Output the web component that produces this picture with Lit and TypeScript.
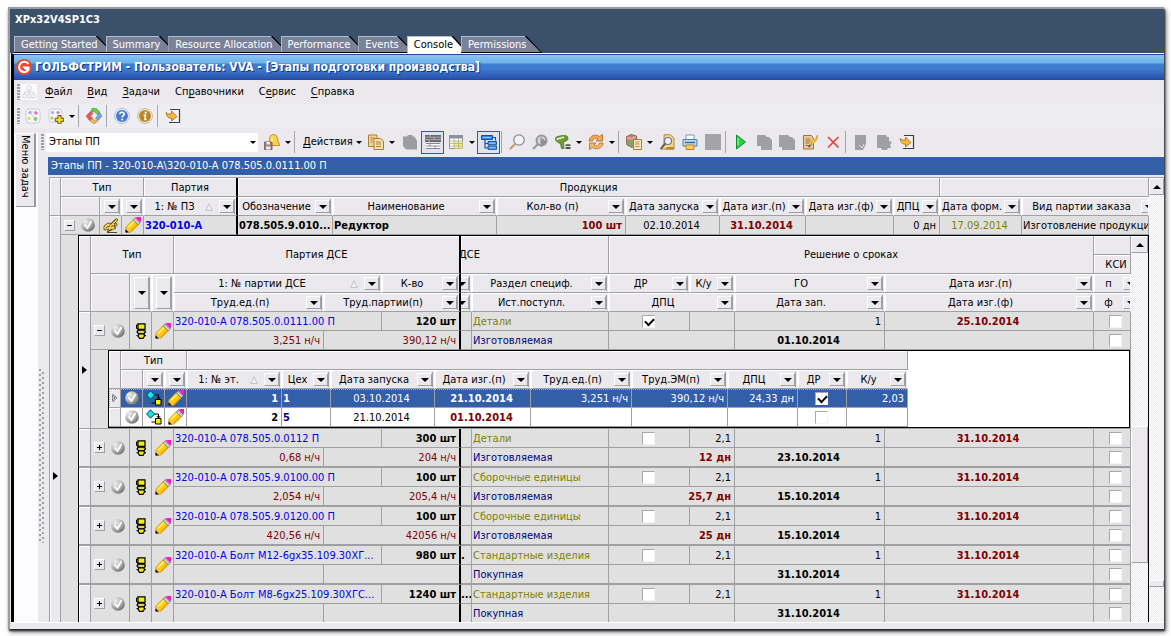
import { LitElement, html, css, svg, nothing } from "lit";
import { customElement, property, state } from "lit/decorators.js";

const ball = svg`
  <defs><radialGradient id="b" cx=".3" cy=".25" r=".85"><stop offset="0" stop-color="#f0f0f0"/><stop offset=".5" stop-color="#b8b8b8"/><stop offset="1" stop-color="#686868"/></radialGradient></defs>
  <circle cx="8" cy="8" r="6.800" fill="url(#b)"/><path d="M4.500 7.500 7.500 11 11.500 4" fill="none" stroke="#fff" stroke-width="1.800"/>`;
const exportArrow = svg`
  <path d="M5 1.500h9.500v13H4" fill="#f3f2f5" stroke="#3c3c44" stroke-width="1.200"/>
  <path d="M1 4.500c2 2 3 1.500 5.500 1.500V3L12 8.500 6.500 13V10C3.500 10.500 2 9 1 4.500z" fill="#f8b93c" stroke="#9a6410" stroke-width=".8"/>`;

const icons: Record<string, unknown> = {
  logo: svg`<circle cx="8" cy="8" r="8" fill="#e8492f"/><path d="M12.500 4.800A5.200 5.200 0 1 0 12.500 11V8.500H8.500L11 11" fill="none" stroke="#fff" stroke-width="2"/>`,
  ball,
  minus: svg`<path d="M4 8h8" stroke="#000" stroke-width="1.800"/>`,
  plus: svg`<path d="M3.500 8h9M8 3.500v9" stroke="#000" stroke-width="1.800"/>`,
  pencil: svg`
    <path d="M.8 15.200V10L8 2.800 13.200 8 6 15.200z" fill="#ffcc08" stroke="#c88800" stroke-width=".6"/>
    <path d="M3 10.500 9.500 4" stroke="#fff08a" stroke-width="1.400"/><path d="M6 14 12 8" stroke="#f0a400" stroke-width="1.400"/>
    <path d="M8 2.800 10.500.6 15.400 5.500 13.200 8z" fill="#b4b4b4" stroke="#707070" stroke-width=".6"/><path d="M9.500 2.500 13.800 6.800" stroke="#e8e8e8"/>
    <path d="M10.500.6 12.500 0H16V4L15.400 5.500z" fill="#ff18c8"/>
    <path d="M.8 15.200V10.500l4.700 4.700z" fill="#e8b878"/><path d="M.5 15.500V12.200l3.300 3.300z" fill="#000"/>`,
  quill: svg`
    <path d="M1 9 5 6 8 6.500 13 1.500 15 3 11 7 14 6.500V8.500L11 10 13 11 10 12.500 4 15 6 12 1 13z" fill="#f8d860" stroke="#5a3c00" stroke-width=".8"/>
    <path d="M3 10.500 7 9M6.500 8.500 13 2.500M5.500 14 9 12M8 9.500 12.500 8M4 15.500h10" stroke="#3c2400" stroke-width=".8" fill="none"/>`,
  unit: svg`
    <path d="M5 .8h7v5.500H5z" fill="#f4ee10" stroke="#000" stroke-width="1.200"/><path d="M5 2H3.500v3.500H5" fill="none" stroke="#000"/>
    <path d="M5 7.200h6.500l1 1.800-1.500 1.800H5.500L4 9z" fill="#b8b8a0" stroke="#000" stroke-width="1.200"/><path d="M6.500 9h4" stroke="#f4ee10" stroke-width="1.200"/>
    <path d="M6 11h5l.5 2-1.500 2.300H6.500L5 13z" fill="#f4ee10" stroke="#000" stroke-width="1.200"/><path d="M3.500 12.500 5.500 13M13 12.500 11 13" stroke="#000"/>`,
  flow: svg`
    <path d="M4.500 .8 8.600 5 4.500 9.200 .6 5z" fill="#10e8f0" stroke="#004848" stroke-width="1"/>
    <path d="M8.500 5H12.500v4M10.800 7 12.500 9 14.200 7" fill="none" stroke="#000" stroke-width="1"/>
    <path d="M9.500 9.500h5.500v5.500H9.500z" fill="#f8f000" stroke="#000"/><path d="M5.500 13h3.500" stroke="#000"/>`,
  current: svg`<path d="M5.500 3 11.500 8 5.500 13z" fill="#fff" stroke="#000" stroke-width="1.200" stroke-dasharray="1.500 .7"/><circle cx="7.800" cy="8" r="1" fill="#000"/>`,
  tree: svg`<path d="M0 0h16v16H0z" fill="#fbfbfd"/><path d="M6 2h4v4H6zM2 10h3v4H2zM7 10h3v4H7zM11 10h3v4h-3zM8 6v4M3.500 10V8h9v2" fill="none" stroke="#d8d8dc"/>`,
  nodes: svg`<rect x="1" y="1" width="14" height="14" rx="3" fill="#f5f5f8" stroke="#c4c6cc" stroke-width=".8"/>
    <circle cx="5" cy="4.500" r="1.600" fill="#7db4e8"/><circle cx="11" cy="5" r="1.800" fill="#e070c8"/><circle cx="4" cy="10.500" r="1.600" fill="#dfdc60"/><circle cx="10.500" cy="11" r="2" fill="#8cc870"/><path d="M5 5 10 10M6 4h4" stroke="#b8bcc4" stroke-width=".7"/>`,
  nodesAdd: svg`<rect x="1" y="1" width="13" height="13" rx="3" fill="#f5f5f8" stroke="#c4c6cc" stroke-width=".8"/>
    <circle cx="4.500" cy="4.500" r="1.500" fill="#7db4e8"/><circle cx="10" cy="4.500" r="1.600" fill="#e070c8"/><circle cx="4" cy="10" r="1.600" fill="#a8cc60"/>
    <path d="M10 7.500h3v2.800h2.800v3H13V16h-3v-2.700H7.200v-3H10z" fill="#f2e030" stroke="#4c4410" stroke-width=".9"/>`,
  ring: svg`<path d="M6 0 10.500.5 14 4 11.500 6.500 8.500 4 5 4z" fill="#6ccc50" stroke="#38902c" stroke-width=".5"/><path d="M13.500 4.500 16 8 12.500 12 9.500 10.500 11.500 7.500z" fill="#70a8ec" stroke="#3468b0" stroke-width=".5"/>
    <path d="M12 12.500 8.500 16 4 13 6 10.500 8.500 12z" fill="#f0b858" stroke="#b06820" stroke-width=".5"/><path d="M4.500 3.500 0 8 3.500 12.500 6.500 10 4.500 8 7 5.500z" fill="#e85c58" stroke="#a83030" stroke-width=".5"/>`,
  help: svg`<circle cx="8" cy="8" r="7.500" fill="#e8eefa" stroke="#a8b8d8" stroke-width=".8"/><circle cx="8" cy="8" r="6" fill="#4a7ad8"/><path d="M5.800 6.300C5.900 3.500 10.300 3.700 10.200 6.300 10.100 7.700 8.200 7.700 8.100 9.400" stroke="#fff" stroke-width="1.600" fill="none"/><circle cx="8.100" cy="11.500" r="1" fill="#fff"/>`,
  info: svg`<circle cx="8" cy="8" r="7.500" fill="#f2ecd8" stroke="#c8b480" stroke-width=".8"/><circle cx="8" cy="8" r="6" fill="#b8862c"/><circle cx="8.600" cy="4.700" r="1.100" fill="#fff"/><path d="M6.600 7.300H8.500L7.900 11.500H9.500" stroke="#fff" stroke-width="1.500" fill="none"/>`,
  exit: exportArrow,
  bell: svg`<path d="M8.500.5h1.500c3 .5 3.500 3 4 6.500l2 4.500H4C6 8 4.500 1.500 8.500.5z" fill="#fbd04c" stroke="#b87c14" stroke-width=".8"/><path d="M8.500 3c-1 2-.5 4-1 6" stroke="#fff0b0" stroke-width="1.400" fill="none"/><path d="M.5 8h7.500v7.500H.5z" fill="#a08078" stroke="#6a5450" stroke-width=".8"/><path d="M2.500 8h3.500v2.500H2.500zM2 12.500h4.500v3H2z" fill="#eee"/>`,
  copy: svg`<path d="M.5 1h8.500v11.500H.5z" fill="#f2d498" stroke="#a87c34"/><path d="M6 4.500h6.500L15.500 7v8.500H6z" fill="#f8dfae" stroke="#a87c34"/><path d="M2.500 4h4M2.500 6h2M2.500 8h2M8 8h5M8 10h5M8 12.500h5" stroke="#b07c38" stroke-width="1.200"/>`,
  paste: svg`<path d="M1 2.500h4L6 1h4l1 1.500h1.500L15 7v8.500H4L1 12z" fill="#9c9ca0"/>`,
  bricks: svg`<path d="M0 1h16v7H0z" fill="#68686c"/><path d="M0 3.200h16M0 5.600h16M5 1v2M9 3v2.500M4 5.500V8" stroke="#b8b8bc" stroke-width=".9"/><path d="M1 9h14v6H1z" fill="#fff"/><path d="M1 9.500h14M1 12h14M1 14.500h14M5 9v3M10 12v3" stroke="#88888c" stroke-width="1"/>`,
  sheet: svg`<path d="M1.500 1.500h13v13h-13z" fill="#fff" stroke="#909094"/><path d="M1 1h14v3.500H1z" fill="#8c9098"/><path d="M6 7h8.500v7.500H6z" fill="#fbf264"/><path d="M1 7h14M1 9.500h14M1 12h14M6 4v11M10.500 4v11" stroke="#a8a8ac" stroke-width=".8"/>`,
  hier: svg`<path d="M.5 1.500h11v4H.5z" fill="#2c8cf0" stroke="#1450a0"/><path d="M11.500 3.500h3v3M4 6v8h4M4 9.500h4" fill="none" stroke="#1450a0" stroke-width="1.200"/><path d="M7 7.500h8.500v3.300H7zM7 12h8.500v3.300H7z" fill="#4ca4f8" stroke="#1450a0"/><path d="M2 3.500h8M8.500 9.200h5.500M8.500 13.700h5.500" stroke="#a8d4ff" stroke-width=".8"/>`,
  search: svg`<circle cx="10" cy="6" r="5.200" fill="#f4f4f8" stroke="#88888e" stroke-width="1.200"/><path d="M6.300 9.700 .8 15.200" stroke="#c89c68" stroke-width="2"/>`,
  searchNext: svg`<circle cx="9.500" cy="6.500" r="5" fill="#d4d4d8" stroke="#98989c" stroke-width="2"/><path d="M6.500 9.500 1 15" stroke="#98989c" stroke-width="2.200"/><path d="M8.500 3 15 8 8.500 13z" fill="#909094"/>`,
  funnel: svg`<path d="M0 4.500C.5 2 11 .5 12.500 2.500L13 5.500 8.500 8.500 9 14.500H6.500L5.500 9.500C3 9 .5 7 0 4.500z" fill="#6c9c34" stroke="#4c7420" stroke-width=".8"/><path d="M1.500 5C5 4.500 7 4 9 3" stroke="#d8ecb8" stroke-width="1.800" fill="none"/><path d="M10.500 11.200h5M10.500 14h5" stroke="#222" stroke-width="1.300"/>`,
  refresh: svg`<path d="M1 7C1.500 1 8 0 11.500 2.500L14.500.5V7H8l2-2C8 3.500 5 4 4.500 7z" fill="#f8a850" stroke="#b06820" stroke-width=".8"/><path d="M15 9c-.5 6-7 7-10.500 4.500L1.500 15.500V9H8l-2 2c2 1.500 5 1 5.500-2z" fill="#f8b868" stroke="#b06820" stroke-width=".8"/>`,
  copyRed: svg`<path d="M0 3 5 .5 10.500 2v8L6 13.500 1 11z" fill="#c88878" stroke="#8c4438" stroke-width=".8"/><path d="M1 3.500 5.500 5 10 2.500" stroke="#ecc8c0" fill="none"/><path d="M2.500 6h4v6h-4z" fill="#68b060"/><path d="M7.500 5.500h8v10h-8z" fill="#fbe8bc" stroke="#a87c34"/><path d="M9 8h4.500M9 10h4.500M9 12.500h4.500" stroke="#b88c48"/>`,
  preview: svg`<path d="M5 .8h6.500L15 4v11H2L5 9z" fill="#f4d490" stroke="#b08c48"/><path d="M8 13h7v2.500H6z" fill="#b88630"/><circle cx="9" cy="7" r="3.500" fill="#eef4fa" stroke="#78787c" stroke-width="1.200"/><path d="M6.500 9.500 1.500 15" stroke="#555" stroke-width="1.800"/>`,
  print: svg`<path d="M4 1h8v5H4z" fill="#fff" stroke="#6898c0"/><path d="M1 5.500h14v6.500H1z" fill="#b8d8ec" stroke="#4c84b0"/><path d="M3 8.500h10" stroke="#3c6490" stroke-width="1.300"/><path d="M4 11h8v4.500H4z" fill="#fbc868" stroke="#c08428"/>`,
  square: svg`<path d="M0 0h16v16H0z" fill="#a4a4a8"/>`,
  play: svg`<path d="M3.500 1 12.500 8 3.500 15z" fill="#2cd048" stroke="#108c28" stroke-width="1"/><path d="M5 4v7" stroke="#8cf8a0" stroke-width="1.300"/>`,
  grayDoc: svg`<path d="M1 1h8l2 2h2l3 3v10H5v-4H1z" fill="#a0a0a4"/>`,
  grayDocs: svg`<path d="M0 1h9l2 2h2l3 3v10H3v-3H0z" fill="#a0a0a4"/>`,
  edit: svg`<path d="M1.500 1.500h8l2 3v10.500h-10z" fill="#eecb90" stroke="#98743c"/><path d="M3.500 5h5M3.500 7h5M3.500 9h4M3.500 11.500h3" stroke="#98743c"/><path d="M15.500 1C15.500 6 13 9 9 11 9 8 9.500 6.500 11.500 5.500 12 7 14 5 15.500 1z" fill="#fbc838" stroke="#c88c10" stroke-width=".7"/><path d="M6.500 13 8.500 11" stroke="#223c90" stroke-width="1.500"/>`,
  remove: svg`<path d="M3 3 13.500 13.500M13.500 3 3 13.500" stroke="#e0443c" stroke-width="1.700"/>`,
  grayTag: svg`<path d="M2 1h11v9l-3 6H2z" fill="#a0a0a4"/><path d="M6 11l3 3 2-4" stroke="#e4e4e8" fill="none"/>`,
  grayGear: svg`<path d="M1 1h9l1 2h2v4l3 1-2 3 1 3h-3l-1 2H6l-1-2H1z" fill="#a0a0a4"/>`,
};

@customElement("gs-icon")
class GsIcon extends LitElement {
  @property() name = "";
  static styles = css`
    :host { display: inline-flex; flex: none; width: 16px; height: 16px; }
    svg { display: block; width: 100%; height: 100%; }
  `;
  render() {
    return html`<svg viewBox="0 0 16 16" aria-hidden="true">${icons[this.name]}</svg>`;
  }
}

interface Part {
  name: string;
  qty: string;
  more?: string;
  unit: string;
  total: string;
  section: string;
  source: string;
  checked?: boolean;
  ratio: string;
  days: string;
  start: string;
  end: string;
  open?: boolean;
}

const parts: Part[] = [
  { name: "320-010-А 078.505.0.0111.00 П", qty: "120 шт", unit: "3,251 н/ч", total: "390,12 н/ч", section: "Детали", source: "Изготовляемая", checked: true, ratio: "", days: "", start: "01.10.2014", end: "25.10.2014", open: true },
  { name: "320-010-А 078.505.0.0112 П", qty: "300 шт", unit: "0,68 н/ч", total: "204 н/ч", section: "Детали", source: "Изготовляемая", ratio: "2,1", days: "12 дн", start: "23.10.2014", end: "31.10.2014" },
  { name: "320-010-А 078.505.9.0100.00 П", qty: "100 шт", unit: "2,054 н/ч", total: "205,4 н/ч", section: "Сборочные единицы", source: "Изготовляемая", ratio: "2,1", days: "25,7 дн", start: "15.10.2014", end: "31.10.2014" },
  { name: "320-010-А 078.505.9.0120.00 П", qty: "100 шт", unit: "420,56 н/ч", total: "42056 н/ч", section: "Сборочные единицы", source: "Изготовляемая", ratio: "2,1", days: "25 дн", start: "15.10.2014", end: "31.10.2014" },
  { name: "320-010-А Болт М12-6gx35.109.30ХГ...", qty: "980 шт", more: ".", unit: "", total: "", section: "Стандартные изделия", source: "Покупная", ratio: "2,1", days: "", start: "31.10.2014", end: "31.10.2014" },
  { name: "320-010-А Болт М8-6gx25.109.30ХГС...", qty: "1240 шт", more: "...", unit: "", total: "", section: "Стандартные изделия", source: "Покупная", ratio: "2,1", days: "", start: "31.10.2014", end: "31.10.2014" },
];

const stages = [
  { no: "1", shop: "1", start: "03.10.2014", end: "21.10.2014", unit: "3,251 н/ч", total: "390,12 н/ч", cycle: "24,33 дн", done: true, ratio: "2,03", selected: true },
  { no: "2", shop: "5", start: "21.10.2014", end: "01.10.2014", unit: "", total: "", cycle: "", done: false, ratio: "", selected: false },
];

@customElement("app-root")
class AppRoot extends LitElement {
  @state() private tab = "Console";

  static styles = css`
    :host { display: block; box-sizing: border-box; height: 100vh; padding: 7px 7px 7px 8px; background: #fff; overflow: hidden;
      font: 11px/18px Tahoma, "DejaVu Sans Condensed", "DejaVu Sans", sans-serif; color: #000; }
    * { box-sizing: border-box; }
    button, select, input { font: inherit; color: inherit; margin: 0; padding: 0; border: 0; border-radius: 0; background: none; }
    .frame { display: flex; flex-direction: column; height: 100%; border: solid #9c9c9c; border-width: 2px 0 0 2px; background: #ebe9ee; box-shadow: 1px 2px 2px #222, 2px 3px 5px rgba(0,0,0,.5); }
    .host { flex: none; display: flex; flex-direction: column; height: 44px; background: #3b506a; }
    .machine { height: 27px; padding: 2px 0 0 5px; font-weight: bold; color: #fff; }
    .tabs { display: flex; height: 17px; padding-left: 4px; isolation: isolate; }
    .tab { position: relative; height: 17px; padding: 0 16px 1px 7px; margin-right: -8px; line-height: 15px; color: #fff; white-space: nowrap; }
    .tab::before, .tab::after { content: ""; position: absolute; inset: 0; z-index: -1; background: #000; clip-path: polygon(0 0, calc(100% - 16px) 0, 100% 100%, 0 100%); }
    .tab::after { background: #7a8299; inset: 0 2px 1px 0; border: solid #b4bac8; border-width: 1px 0 0 1px; }
    .tab.on { color: #000; }
    .tab.on::after { background: #fff; inset: 0 2px 0 0; }
    .title { flex: none; display: flex; align-items: center; gap: 3px; height: 27px; margin-left: 1px; border-top: 1px solid #fff; border-left: 3px solid #000; padding-left: 2px; color: #fff; font-size: 12px; font-weight: bold; text-shadow: 1px 1px #143080; white-space: nowrap;
      background: linear-gradient(#2448a8 0 1px, #8cc4f0 1px, #6cb0ea 9px, #3c80d6 10px, #3c78cc 16px, #2850ac 25px, #2244a0 26px); }
    .app { flex: 1; min-height: 0; display: flex; flex-direction: column; margin-left: 1px; border-left: 3px solid #000; }
    .bar { flex: none; display: flex; align-items: center; height: 24px; padding-left: 3px; white-space: nowrap; }
    .bar.light { background: #eeedf1; }
    .grip { flex: none; width: 3px; height: 16px; background: repeating-linear-gradient(#a0a0a4 0 2px, transparent 2px 3px); }
    .menu { padding: 0 7px; height: 20px; }
    .menubar { gap: 1px; }
    .u { text-decoration: underline; text-underline-offset: 2px; }
    .tool { flex: none; display: inline-flex; align-items: center; justify-content: center; width: 23px; height: 23px; }
    .tool.pressed { border: 1px solid #2f5aa8; background: #e0e3ee; }
    .drop { flex: none; display: inline-flex; width: 10px; height: 20px; align-items: center; justify-content: center; }
    .tri { border: solid transparent; border-width: 3px 3px 0; border-top-color: #000; }
    .sep { flex: none; width: 1px; height: 22px; margin: 0 3px 0 1px; background: #a4a4a8; }
    .word { padding: 0 2px 0 5px; width: 56px; text-align: left; }
    .tool.gap { margin-left: 1px; }
    .body { flex: 1; min-height: 0; display: flex; }
    .side { flex: none; width: 24px; padding: 5px 2px 0; background: linear-gradient(#ebe9ee 5px, #fcfbff 5px); }
    .sidetab { writing-mode: vertical-rl; width: 20px; height: 74px; line-height: 18px; padding: 1px 0 0; text-align: left; background: #ebe9ee; border: solid #98989c; border-width: 0 2px 1px 0; border-top: 1px solid #fff; }
    .work { flex: 1; min-width: 0; display: flex; flex-direction: column; }
    .bar.second { height: 29px; padding-bottom: 1px; }
    .combo { position: relative; width: 212px; height: 19px; margin: 0 2px; background: #fff; }
    .combo select { appearance: none; width: 100%; height: 19px; padding-left: 3px; outline: 0; }
    .combo .tri { position: absolute; right: 2px; top: 8px; pointer-events: none; }
    .split { flex: 1; min-height: 0; display: flex; }
    .splitter { flex: none; width: 10px; display: flex; align-items: center; padding: 132px 0 0 1px; }
    .dots { width: 5px; height: 174px; background-image: radial-gradient(circle at 1px 1px, #a0a0a4 1px, transparent 1px), radial-gradient(circle at 4px 4px, #a0a0a4 1px, transparent 1px); background-size: 5px 5px; }
    .panel { flex: 1; min-width: 0; display: flex; flex-direction: column; }
    .caption { flex: none; height: 18px; padding-left: 3px; line-height: 18px; color: #fff; background: #335ea8; white-space: nowrap; overflow: hidden; }
    .view { flex: 1; min-height: 0; display: flex; margin: 2px 0 0 1px; border: solid #a0a0a4; border-width: 1px 0 0 1px; overflow: hidden; }
    .clip { flex: 1; min-width: 0; overflow: hidden; }
    .status { flex: none; height: 7px; border-top: 1px solid #fff; }

    table { table-layout: fixed; width: 100%; border-spacing: 0; border-collapse: separate; }
    th, td { height: 19px; padding: 0 3px 0 1px; border: solid #a0a0a4; border-width: 0 1px 1px 0; font-weight: normal; line-height: 17px; white-space: nowrap; overflow: hidden; text-overflow: clip; text-align: left; vertical-align: middle; }
    th { padding: 0; background: #ebe9ee; box-shadow: inset 1px 1px #fff; text-align: center; }
    td { background: #e0e0e0; }
    th.f { border-right-color: #fff; }
    td.ind, th.ind { padding: 0; background: #ebe9ee; box-shadow: inset 1px 1px #fff; }
    .thick { border-right: 2px solid #000; }
    th.f.thick { border-right-color: #000; }
    .head { display: flex; align-items: center; height: 15px; margin: 1px 1px 0 0; border-right: 1px solid #a0a0a4; }
    .tall .head { height: 33px; }
    .head span { flex: 1; text-align: center; min-width: 0; }
    .head.cut { margin-right: -9px; }
    .cutbox { margin-right: -8px; display: flex; justify-content: center; }
    .end { justify-content: flex-end; }
    .sort { flex: none; width: 8px; height: 8px; margin-right: 6px; fill: #f0eff3; stroke: #c4c4c8; }
    .filter { flex: none; display: flex; align-items: center; justify-content: center; width: 15px; height: 13px; background: #ebe9ee; border: solid; border-color: #fff #a0a0a4 #a0a0a4 #fff; border-width: 1px; }
    .tall .filter { height: 32px; }
    .filter .tri, .scroll .tri { border-width: 4px 4px 0; }
    .marks { display: flex; align-items: center; padding-left: 2px; gap: 5px; }
    .exp { width: 11px; height: 11px; display: flex; background: #ebe9ee; border: solid; border-width: 1px; border-color: #fff #a0a0a4 #a0a0a4 #fff; outline: 0; }
    .exp gs-icon { width: 9px; height: 9px; }
    td.pic { padding: 0; text-align: center; }
    .pic gs-icon { display: flex; margin: 0 auto; }
    .arrow { display: block; width: 5px; margin: 0 auto; border: solid transparent; border-width: 4px 0 4px 5px; border-left-color: #000; }
    td.ind.long { padding-top: 112px; }
    .ind gs-icon { display: flex; width: 11px; height: 12px; }
    .r { text-align: right; }
    .c { text-align: center; }
    .b { font-weight: bold; }
    .blue { color: #0000e8; }
    .navy { color: #000080; }
    .red { color: #800000; }
    .olive { color: #808000; }
    td.more { padding: 0; }
    .group { height: 38px; }
    .dse { text-align: left; text-indent: -2px; }
    .second-line td, td.tail { border-bottom-width: 2px; height: 20px; }
    .second-line.open td, .first.open td { border-bottom-width: 1px; height: 19px; }
    input[type="checkbox"] { appearance: none; display: block; position: relative; width: 13px; height: 13px; margin: 0 auto; background: #fff; border: 1px solid; border-color: #a8a8ac #f4f4f4 #f4f4f4 #a8a8ac; outline: 0; }
    .cutbox input[type="checkbox"] { margin: 0; }
    input[type="checkbox"]:checked::after { content: ""; position: absolute; left: 2px; top: 2px; width: 7px; height: 4px; border: solid #000; border-width: 0 0 2px 2px; transform: rotate(-45deg); }
    td.nest { padding: 0 0 0 17px; }
    .outer > tbody > tr > td.nest { border: 0; vertical-align: top; }
    .sub { display: flex; border: 1px solid #000; border-bottom: 0; }
    .detail { background: #fff; border: 1px solid #000; }
    .detail table { width: 799px; }
    .detail td { background: #fff; }
    .detail td.ind { background: #ebe9ee; }
    .sel { outline: 1px dotted #e0a050; outline-offset: -1px; }
    .sel td:not(.ind) { background: #335ea8; color: #fff; }
    .scroll { flex: none; display: flex; flex-direction: column; width: 17px; background: conic-gradient(#fff 25%, #ebe9ee 0 50%, #fff 0 75%, #ebe9ee 0) 0 0 / 2px 2px; }
    .scroll.main { width: 15px; }
    .up { display: flex; align-items: center; justify-content: center; height: 17px; background: #ebe9ee; border: solid; border-width: 1px; border-color: #fff #a0a0a4 #a0a0a4 #fff; }
    .up .tri { border-width: 0 4px 4px; border-color: transparent; border-bottom-color: #000; }
    .thumb { height: 137px; margin-top: 173px; background: #ebe9ee; border: solid; border-width: 1px; border-color: #fff #a0a0a4 #a0a0a4 #fff; }
    .main .thumb { height: 7px; margin-top: 385px; }
  `;

  private drop = (label: string) => html`<button class="drop" aria-label=${label}><i class="tri"></i></button>`;
  private tool = (icon: string, label: string, extra = "") =>
    html`<button class="tool ${extra}" aria-label=${label}><gs-icon name=${icon}></gs-icon></button>`;
  private menu = (before: string, key: string, after: string) =>
    html`<button class="menu">${before}<span class="u">${key}</span>${after}</button>`;
  private sep = html`<i class="sep"></i>`;

  private filter = (label: string) =>
    html`<button class="filter" aria-label=${"Фильтр " + label}><i class="tri"></i></button>`;
  private head(label: string, o: { sort?: boolean; cls?: string; cut?: boolean; span?: number; rows?: number; end?: boolean } = {}) {
    return html`<th class="f ${o.cls ?? ""}" colspan=${o.span ?? 1} rowspan=${o.rows ?? 1}>
      <div class="head ${o.cut ? "cut" : ""} ${o.end ? "end" : ""}">
        ${o.end ? nothing : html`<span>${label}</span>`}
        ${o.sort ? html`<svg class="sort" viewBox="0 0 8 8"><path d="M4 .8 7.300 7.500H.7z"/></svg>` : nothing}
        ${this.filter(label)}
      </div></th>`;
  }
  private check = (label: string, on = false) =>
    html`<input type="checkbox" aria-label=${label} .checked=${on} />`;
  private cols = (w: number[]) => html`<colgroup>${w.map((x) => html`<col width=${x} />`)}<col /></colgroup>`;

  private detail() {
    return html`<div class="detail"><table>
      ${this.cols([12, 22, 22, 22, 95, 49, 104, 96, 101, 96, 70, 49])}
      <thead>
        <tr><th class="ind" rowspan="2"></th><th colspan="3">Тип</th><th colspan="9"></th></tr>
        <tr><th></th>${this.head("", { end: true })}${this.head("", { end: true })}
          ${this.head("1: № эт.", { sort: true })}${this.head("Цех")}${this.head("Дата запуска")}${this.head("Дата изг.(п)")}
          ${this.head("Труд.ед.(п)")}${this.head("Труд.ЭМ(п)")}${this.head("ДПЦ")}${this.head("ДР")}${this.head("К/у")}</tr>
      </thead>
      <tbody>${stages.map((s) => html`<tr class=${s.selected ? "sel" : ""}>
        <td class="ind">${s.selected ? html`<gs-icon name="current"></gs-icon>` : nothing}</td>
        <td class="pic"><gs-icon name="ball"></gs-icon></td><td class="pic"><gs-icon name="flow"></gs-icon></td><td class="pic"><gs-icon name="pencil"></gs-icon></td>
        <td class="r b">${s.no}</td><td class="b ${s.selected ? "" : "navy"}">${s.shop}</td>
        <td class="c">${s.start}</td><td class="c b ${s.selected ? "" : "red"}">${s.end}</td>
        <td class="r">${s.unit}</td><td class="r">${s.total}</td><td class="r">${s.cycle}</td>
        <td>${this.check("ДР этап " + s.no, s.done)}</td><td class="r">${s.ratio}</td></tr>`)}</tbody>
    </table></div>`;
  }

  private part(p: Part) {
    const o = p.open ? "open" : "";
    return html`<tr class="first ${o}">
        <td class="ind ${p.open ? "" : "tail"}" rowspan=${p.open ? 3 : 2}>${p.open ? html`<i class="arrow"></i>` : nothing}</td>
        <td class="tail" rowspan="2"><div class="marks"><button class="exp" aria-label=${p.name}><gs-icon name=${p.open ? "minus" : "plus"}></gs-icon></button><gs-icon name="ball"></gs-icon></div></td>
        <td class="pic tail" rowspan="2"><gs-icon name="unit"></gs-icon></td>
        <td class="pic tail" rowspan="2"><gs-icon name="pencil"></gs-icon></td>
        <td class="blue" colspan="2">${p.name}</td><td class="r b thick">${p.qty}</td><td class="b more">${p.more ?? ""}</td>
        <td class="olive">${p.section}</td><td>${this.check("ДР " + p.name, p.checked)}</td><td class="r">${p.ratio}</td>
        <td class="r">1</td><td class="c b red">${p.end}</td><td><div class="cutbox">${this.check("КСИ п " + p.name)}</div></td>
      </tr>
      <tr class="second-line ${o}">
        <td class="r red">${p.unit}</td><td class="r red thick" colspan="2">${p.total}</td><td></td>
        <td class="navy">${p.source}</td><td class="r b red" colspan="2">${p.days}</td>
        <td class="c b">${p.start}</td><td></td><td><div class="cutbox">${this.check("КСИ ф " + p.name)}</div></td>
      </tr>
      ${p.open ? html`<tr><td class="nest" colspan="13">${this.detail()}</td></tr>` : nothing}`;
  }

  private sub() {
    return html`<div class="sub"><div class="clip"><table>
      ${this.cols([12, 39, 22, 22, 150, 58, 79, 11, 137, 81, 45, 150, 209])}
      <thead>
        <tr><th class="ind" rowspan="4"></th><th class="group" colspan="3" rowspan="2">Тип</th><th class="thick" colspan="3" rowspan="2">Партия ДСЕ</th>
          <th class="dse" colspan="2" rowspan="2">ДСЕ</th><th colspan="4" rowspan="2">Решение о сроках</th><th></th></tr>
        <tr><th><div class="cutbox">КСИ</div></th></tr>
        <tr><th rowspan="2"></th>${this.head("", { end: true, rows: 2, cls: "tall" })}${this.head("", { end: true, rows: 2, cls: "tall" })}
          ${this.head("1: № партии ДСЕ", { sort: true, span: 2 })}${this.head("К-во", { cls: "thick" })}${this.head("", { end: true })}
          ${this.head("Раздел специф.")}${this.head("ДР")}${this.head("К/у")}${this.head("ГО")}${this.head("Дата изг.(п)")}${this.head("п", { cut: true })}</tr>
        <tr>${this.head("Труд.ед.(п)")}${this.head("Труд.партии(п)", { span: 2, cls: "thick" })}${this.head("", { end: true })}
          ${this.head("Ист.поступл.")}${this.head("ДПЦ", { span: 2 })}${this.head("Дата зап.")}${this.head("Дата изг.(ф)")}${this.head("ф", { cut: true })}</tr>
      </thead>
      <tbody>${parts.map((p) => this.part(p))}</tbody>
    </table></div>
    <div class="scroll"><button class="up" aria-label="Вверх"><i class="tri"></i></button><div class="thumb"></div></div></div>`;
  }

  render() {
    const tabs = ["Getting Started", "Summary", "Resource Allocation", "Performance", "Events", "Console", "Permissions"];
    return html`<div class="frame">
      <header class="host">
        <div class="machine">XPx32V4SP1C3</div>
        <nav class="tabs">${tabs.map((t) => html`<button class="tab ${t === this.tab ? "on" : ""}" @click=${() => (this.tab = t)}>${t}</button>`)}</nav>
      </header>
      <div class="title"><gs-icon name="logo"></gs-icon><span>ГОЛЬФСТРИМ - Пользователь: VVA - [Этапы подготовки производства]</span></div>
      <div class="app">
        <div class="bar menubar"><i class="grip"></i><gs-icon name="tree"></gs-icon>
          ${this.menu("", "Ф", "айл")}${this.menu("", "В", "ид")}${this.menu("", "З", "адачи")}${this.menu("Сп", "р", "авочники")}${this.menu("С", "е", "рвис")}${this.menu("", "С", "правка")}</div>
        <div class="bar light"><i class="grip"></i>
          ${this.tool("nodes", "Структура", "gap")}${this.tool("nodesAdd", "Добавить")}${this.drop("Добавить")}${this.sep}
          ${this.tool("ring", "Процесс")}${this.sep}${this.tool("help", "Справка")}${this.tool("info", "О программе")}${this.sep}${this.tool("exit", "Выход")}</div>
        <div class="body">
          <aside class="side"><button class="sidetab">Меню задач</button></aside>
          <div class="work">
            <div class="bar second"><i class="grip"></i>
              <label class="combo"><select aria-label="Задача"><option>Этапы ПП</option></select><i class="tri"></i></label>
              ${this.tool("bell", "Сохранить напоминание")}${this.drop("Напоминания")}${this.sep}
              <button class="word"><span class="u">Д</span>ействия</button>${this.drop("Действия")}
              ${this.tool("copy", "Копировать")}${this.drop("Копировать")}${this.tool("paste", "Вставить", "gap")}
              ${this.tool("bricks", "Полосы", "pressed")}${this.tool("sheet", "Таблица")}${this.drop("Таблица")}${this.tool("hier", "Иерархия", "pressed")}${this.sep}
              ${this.tool("search", "Найти")}${this.tool("searchNext", "Найти далее")}${this.tool("funnel", "Фильтр")}${this.drop("Фильтр")}
              ${this.tool("refresh", "Обновить")}${this.drop("Обновить")}${this.sep}
              ${this.tool("copyRed", "Отчёты")}${this.drop("Отчёты")}${this.tool("preview", "Просмотр")}${this.tool("print", "Печать")}${this.tool("square", "Стоп")}${this.sep}
              ${this.tool("play", "Пуск")}${this.tool("grayDoc", "Новый")}${this.tool("grayDocs", "Дублировать")}${this.tool("edit", "Изменить")}${this.tool("remove", "Удалить")}${this.sep}
              ${this.tool("grayTag", "Отметить")}${this.tool("grayGear", "Настройка")}${this.tool("exit", "Закрыть")}
            </div>
            <div class="split">
              <div class="splitter"><i class="dots"></i></div>
              <main class="panel">
                <div class="caption">Этапы ПП - 320-010-А\\320-010-А 078.505.0.0111.00 П</div>
                <div class="view">
                  <div class="clip"><table class="outer">
                    ${this.cols([11, 39, 22, 22, 94, 95, 164, 129, 94, 86, 88, 46, 82])}
                    <thead>
                      <tr><th class="ind" rowspan="2"></th><th colspan="3">Тип</th><th class="thick">Партия</th><th colspan="7">Продукция</th><th colspan="2"></th></tr>
                      <tr><th></th>${this.head("", { end: true })}${this.head("", { end: true })}${this.head("1: № ПЗ", { sort: true, cls: "thick" })}
                        ${this.head("Обозначение")}${this.head("Наименование")}${this.head("Кол-во (п)")}${this.head("Дата запуска")}${this.head("Дата изг.(п)")}
                        ${this.head("Дата изг.(ф)")}${this.head("ДПЦ")}${this.head("Дата форм.")}${this.head("Вид партии заказа", { cut: true })}</tr>
                    </thead>
                    <tbody>
                      <tr><td class="ind long" rowspan="2"><i class="arrow"></i></td>
                        <td><div class="marks"><button class="exp" aria-label="Свернуть"><gs-icon name="minus"></gs-icon></button><gs-icon name="ball"></gs-icon></div></td>
                        <td class="pic"><gs-icon name="quill"></gs-icon></td><td class="pic"><gs-icon name="pencil"></gs-icon></td>
                        <td class="b blue thick">320-010-А</td><td class="b">078.505.9.010...</td><td class="b">Редуктор</td><td class="r b red">100 шт</td>
                        <td class="c">02.10.2014</td><td class="c b red">31.10.2014</td><td></td><td class="r">0 дн</td><td class="c olive">17.09.2014</td><td>Изготовление продукции</td></tr>
                      <tr><td class="nest" colspan="13">${this.sub()}</td></tr>
                    </tbody>
                  </table></div>
                  <div class="scroll main"><button class="up" aria-label="Вверх"><i class="tri"></i></button><div class="thumb"></div></div>
                </div>
              </main>
            </div>
          </div>
        </div>
      </div>
      <footer class="status"></footer>
    </div>`;
  }
}
